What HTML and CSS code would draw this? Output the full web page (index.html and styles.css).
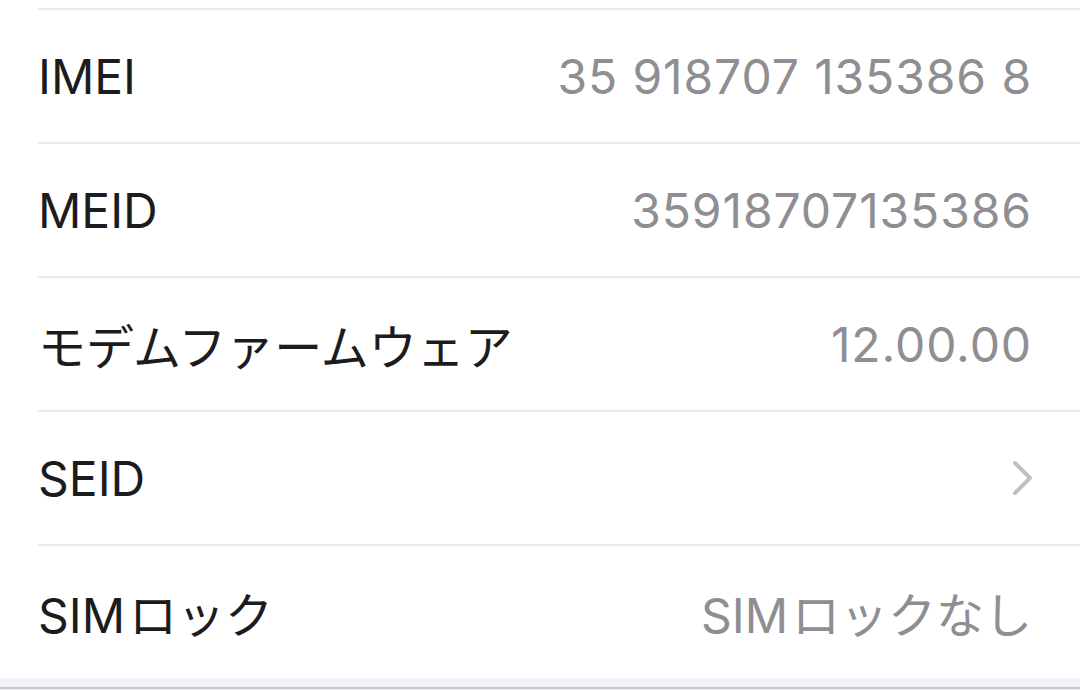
FILE: index.html
```html
<!DOCTYPE html>
<html lang="ja">
<head>
<meta charset="UTF-8">
<title>情報</title>
<link rel="stylesheet" href="styles.css">
</head>
<body>
    <div class="list">
        <div class="row">
            <span class="label">IMEI</span>
            <span class="value digits">35 918707 135386 8</span>
        </div>
        <div class="row">
            <span class="label">MEID</span>
            <span class="value digits">35918707135386</span>
        </div>
        <div class="row">
            <span class="label">モデムファームウェア</span>
            <span class="value digits">12.00.00</span>
        </div>
        <div class="row">
            <span class="label">SEID</span>
            <svg class="chevron" width="22" height="36" viewBox="0 0 22 36">
                <path d="M3 3 L18 18 L3 33" fill="none" stroke="#c0c0c4" stroke-width="4" stroke-linecap="round" stroke-linejoin="round"/>
            </svg>
        </div>
        <div class="row">
            <span class="label">SIM<span class="gap"></span>ロック</span>
            <span class="value">SIM<span class="gap"></span>ロックなし</span>
        </div>
    </div>
    <div class="footer"></div>
</body>
</html>
```

FILE: styles.css
```css
* {
    margin: 0;
    padding: 0;
}
html, body {
    width: 100%;
    height: 100%;
}
body {
    background-color: #f2f2f7;
    font-family: Inter, "Noto Sans CJK JP", sans-serif;
    overflow: hidden;
}

/* grouped list */
.list {
    background-color: white;
    padding-top: 8px;
    padding-left: 38px;
}
.row {
    box-sizing: border-box;
    height: 134px;
    border-top: 2px solid #ebebed;
    padding-right: 48px;
    display: flex;
    align-items: center;
    justify-content: space-between;
}
.label {
    font-size: 48px;
    color: #1c1c1e;
}
.value {
    font-size: 48px;
    color: #8e8e93;
}
.value.digits {
    letter-spacing: 0.9px;
}
.gap {
    display: inline-block;
    width: 4px;
}
.chevron {
    display: block;
    margin-right: -2px;
}

/* bottom edge */
.footer {
    height: 9px;
    border-bottom: 2px solid #c6c6c8;
}
```
